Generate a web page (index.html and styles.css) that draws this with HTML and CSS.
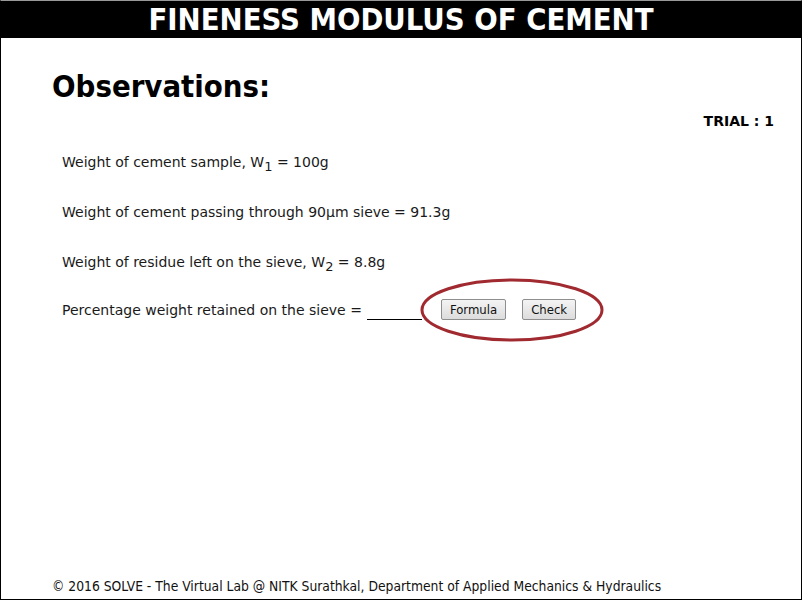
FILE: index.html
```html
<!DOCTYPE html>
<html>
<head>
<meta charset="utf-8">
<link rel="stylesheet" href="styles.css">
</head>
<body>
<div class="frame">
  <div class="header">FINENESS MODULUS OF CEMENT</div>
  <h1 class="title">Observations:</h1>
  <div class="trial">TRIAL : 1</div>
  <div class="rows">
    <div class="row">Weight of cement sample, W<sub>1</sub> = 100g</div>
    <div class="row">Weight of cement passing through 90μm sieve = 91.3g</div>
    <div class="row">Weight of residue left on the sieve, W<sub>2</sub> = 8.8g</div>
    <div class="row last"><span>Percentage weight retained on the sieve =</span><span class="blank"></span>
      <span class="btns">
        <button class="btn">Formula</button>
        <button class="btn">Check</button>
        <svg class="ellipse" width="186" height="66" viewBox="0 0 186 66"><ellipse cx="93" cy="33" rx="90" ry="30" fill="none" stroke="#a02a30" stroke-width="3"/></svg>
      </span>
    </div>
  </div>
  <div class="spacer"></div>
  <div class="footer">© 2016 SOLVE - The Virtual Lab @ NITK Surathkal, Department of Applied Mechanics &amp; Hydraulics</div>
</div>
</body>
</html>
```
FILE: styles.css
```css
html, body { margin: 0; padding: 0; background: #fff; }
.frame {
  width: 800px;
  height: 598px;
  border: 1px solid #000;
  border-top: 1px solid #999;
  display: flex;
  flex-direction: column;
  font-family: "DejaVu Sans", Verdana, sans-serif;
  color: #1a1a1a;
}
.header {
  background: #000;
  color: #fff;
  height: 37px;
  line-height: 37px;
  text-align: center;
  font-family: "DejaVu Sans Condensed", "DejaVu Sans", sans-serif;
  font-weight: bold;
  font-size: 30.7px;
}
.title {
  margin: 31px 0 0 51px;
  font-family: "DejaVu Sans Condensed", "DejaVu Sans", sans-serif;
  font-weight: bold;
  font-size: 30.8px;
  line-height: 34px;
  color: #000;
}
.trial {
  align-self: flex-end;
  margin: 10px 27px 0 0;
  font-weight: bold;
  font-size: 14px;
  line-height: 16px;
  color: #000;
}
.rows {
  margin: 23px 0 0 61px;
  display: flex;
  flex-direction: column;
  gap: 30px;
}
.row {
  font-size: 14px;
  line-height: 20px;
}
.row sub { font-size: 13px; vertical-align: -4px; line-height: 0; }
.row.last {
  display: flex;
  align-items: center;
  margin-top: -3px;
}
.blank {
  display: inline-block;
  width: 55px;
  height: 10px;
  border-bottom: 1px solid #000;
  margin-left: 5px;
  align-self: flex-end;
}
.btns {
  position: relative;
  display: flex;
  gap: 16px;
  margin-left: 19px;
}
.btn {
  font-family: "DejaVu Sans Condensed", "DejaVu Sans", sans-serif;
  font-size: 13px;
  color: #111;
  height: 21px;
  padding: 0 8px;
  border: 1px solid #8e8e8e;
  border-radius: 2px;
  background: linear-gradient(#f4f4f4, #dcdcdc);
}
.ellipse {
  position: absolute;
  left: -22px;
  top: -22px;
}
.spacer { flex: 1; }
.footer {
  margin: 0 0 5px 51px;
  font-family: "DejaVu Sans Condensed", "DejaVu Sans", sans-serif;
  font-size: 13.75px;
  line-height: 16px;
  color: #111;
}
```
